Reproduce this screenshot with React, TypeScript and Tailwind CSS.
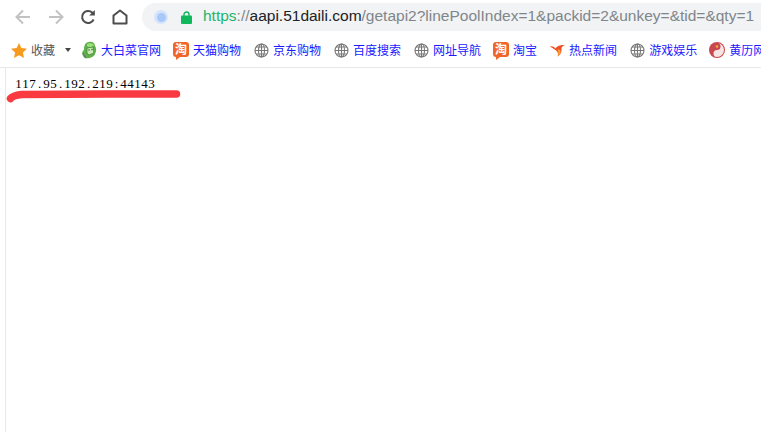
const cjk = { fontFamily: '"Noto Sans CJK SC", "Liberation Sans", sans-serif' };

function Globe() {
  return (
    <svg width="15" height="15" viewBox="0 0 15 15" fill="none" stroke="#777" strokeWidth="1.1" className="shrink-0">
      <circle cx="7.5" cy="7.5" r="6.5" />
      <ellipse cx="7.5" cy="7.5" rx="3" ry="6.5" />
      <path d="M1 7.5h13M2 4h11M2 11h11M7.5 1v13" />
    </svg>
  );
}

function Tao() {
  return (
    <div className="relative w-[16px] h-[15px] mb-[2px] shrink-0 rounded-[3px] bg-[#f0662a] flex items-center justify-center text-white text-[12px] font-bold leading-none" style={cjk}>
      淘
      <div className="absolute left-[3px] bottom-[-3px] w-0 h-0 border-t-[3px] border-t-[#f0662a] border-r-[4px] border-r-transparent" />
    </div>
  );
}

function Cabbage() {
  return (
    <svg width="16" height="18" viewBox="0 0 16 18" className="shrink-0">
      <path d="M4 17C1 15 0 11 3 9 3 5 4 1 8 1c3-1 6 1 6 4 2 3 1 6 0 8-1 3-6 5-10 4z" fill="#5fb04a" />
      <path d="M6 3c2-1 5-1 7 1-1 2-5 3-7 1z" fill="#9be07c" />
      <path d="M6 7l6-1 1 6-5 2-2-2z" fill="#c9e8b4" stroke="#3e8a3a" strokeWidth="0.8" />
      <path d="M2 12c1 2 2 4 3 5" stroke="#777" strokeWidth="1.4" fill="none" />
      <circle cx="8" cy="9" r="0.8" fill="#2f7a3a" />
      <circle cx="11" cy="8.5" r="0.8" fill="#2f7a3a" />
    </svg>
  );
}

function Flame() {
  return (
    <svg width="15" height="13" viewBox="0 0 15 13" className="shrink-0">
      <path d="M0 2.5c2-.5 4 .5 5.5 2C7 2 10 .5 15 1c-2.500 1-4 2.500-3.500 4.500.3 2.500-1.500 6-4 7 1-2.500.5-4.500-1.500-6C4.500 5 2 4 0 2.500z" fill="#ef4f24" />
      <path d="M7.500 5.500c2-.5 3.500.5 3 3-.5 1.500-1.500 3-2.500 3.500.5-2.500.5-4.500-.5-6.500z" fill="#fba62f" />
    </svg>
  );
}

function YinYang() {
  return (
    <svg width="16" height="16" viewBox="0 0 16 16" className="shrink-0">
      <circle cx="8" cy="8" r="8" fill="#c9474f" />
      <path d="M8 1a3.500 3.500 0 0 1 0 7 3.500 3.500 0 0 0 0 7 7 7 0 0 0 0-14z" fill="#f6e3e3" />
      <circle cx="8" cy="4.500" r="1.300" fill="#e9b23c" />
      <circle cx="8" cy="11.500" r="1.200" fill="#f6e3e3" />
    </svg>
  );
}

const bookmarks = [
  { icon: <Cabbage />, name: "大白菜官网", gap: "mr-[12px]" },
  { icon: <Tao />, name: "天猫购物", gap: "mr-[13px]" },
  { icon: <Globe />, name: "京东购物", gap: "mr-[13px]" },
  { icon: <Globe />, name: "百度搜索", gap: "mr-[13px]" },
  { icon: <Globe />, name: "网址导航", gap: "mr-[12px]" },
  { icon: <Tao />, name: "淘宝", gap: "mr-[13px]" },
  { icon: <Flame />, name: "热点新闻", gap: "mr-[13px]" },
  { icon: <Globe />, name: "游戏娱乐", gap: "mr-[12px]" },
  { icon: <YinYang />, name: "黄历网", gap: "" },
];

const ip = "117.95.192.219:44143";

export default function App() {
  return (
    <div className="relative w-[761px] h-[432px] overflow-hidden bg-white flex flex-col">
      {/* Toolbar */}
      <div className="h-[33px] shrink-0 flex items-center pl-[15px]">
        <svg width="16" height="16" viewBox="0 0 16 16" fill="none" stroke="#c2c2c2" strokeWidth="2" className="mr-[17px]">
          <path d="M15 8H2M8 1.500 1.500 8 8 14.500" />
        </svg>
        <svg width="16" height="16" viewBox="0 0 16 16" fill="none" stroke="#c2c2c2" strokeWidth="2" className="mr-[16px]">
          <path d="M1 8h13M8 1.500 14.500 8 8 14.500" />
        </svg>
        <svg width="16" height="16" viewBox="0 0 16 16" fill="none" stroke="#4d4d4d" strokeWidth="2" className="mr-[16px]">
          <path d="M13.600 10.500A6 6 0 1 1 12.200 3.600L14 5.500" />
          <path d="M14.800 1v5.600H9.200z" fill="#4d4d4d" stroke="none" />
        </svg>
        <svg width="16" height="16" viewBox="0 0 16 16" fill="none" stroke="#4d4d4d" strokeWidth="2" strokeLinejoin="round" className="mr-[14px]">
          <path d="M1.500 14.500V6.500L8 1.500l6.500 5v8z" />
        </svg>
        <div className="flex-1 h-[28px] mt-[1px] bg-[#f1f3f4] rounded-l-[14px] flex items-center pl-[12px] min-w-0 overflow-hidden">
          <div className="w-[14px] h-[14px] rounded-full bg-[#d6e4fb] flex items-center justify-center shrink-0 mr-[13px]">
            <div className="w-[9px] h-[9px] rounded-full bg-[#a9c8fa]" />
          </div>
          <svg width="11" height="13" viewBox="0 0 11 13" className="shrink-0 mr-[11px]">
            <path d="M3 6V3.500a2.500 2.500 0 0 1 5 0V6" fill="none" stroke="#0fb85a" strokeWidth="1.400" />
            <rect x="0" y="4.500" width="11" height="8.500" rx="1" fill="#0fb85a" />
          </svg>
          <div className="whitespace-nowrap text-[15.5px] leading-[20px] mb-[2px] text-[#80868b]" style={{ fontFamily: '"Liberation Sans", Arial, sans-serif' }}>
            <span className="text-[#1db56c]">https</span>://<span className="text-[#202124]">aapi.51daili.com</span>/getapi2?linePoolIndex=1&amp;packid=2&amp;unkey=&amp;tid=&amp;qty=1
          </div>
        </div>
      </div>

      {/* Bookmarks */}
      <div className="h-[35px] shrink-0 border-b border-[#e8e8e8] flex items-center pl-[11px] whitespace-nowrap text-[12px] leading-none overflow-hidden" style={cjk}>
        <svg width="16" height="15" viewBox="0 0 16 15" className="shrink-0 mr-[4px]">
          <path d="M8 0l2.400 5 5.600.7-4.100 3.800 1.100 5.500L8 12.300 3 15l1.100-5.500L0 5.700 5.600 5z" fill="#f79a1e" />
        </svg>
        <span className="text-[#555] mr-[10px]">收藏</span>
        <div className="w-0 h-0 border-x-[3.500px] border-x-transparent border-t-[4px] border-t-[#444] mr-[10px]" />
        {bookmarks.map((b) => (
          <div key={b.name} className={`flex items-center gap-[4px] shrink-0 ${b.gap}`}>
            {b.icon}
            <span className="text-[#1a1aff]">{b.name}</span>
          </div>
        ))}
      </div>

      {/* Page */}
      <div className="flex-1 ml-[5px] border-l border-[#e8e8e8] pl-[9px] pt-[9px]">
        <div className="flex text-[13px] leading-[14px] text-black" style={{ fontFamily: '"Liberation Serif", serif' }}>
          {ip.split("").map((c, i) => (
            <span key={i} className="w-[7px] text-center">{c}</span>
          ))}
        </div>
      </div>

      {/* Marker stroke over the text */}
      <svg width="190" height="20" viewBox="0 0 190 20" fill="none" className="absolute left-0 top-[87px]">
        <path d="M10.500 11.500C13 8.500 18 8 22 7.500C60 7 130 7 176.500 7" stroke="#f93a40" strokeWidth="7.500" strokeLinecap="round" strokeLinejoin="round" />
      </svg>
    </div>
  );
}
